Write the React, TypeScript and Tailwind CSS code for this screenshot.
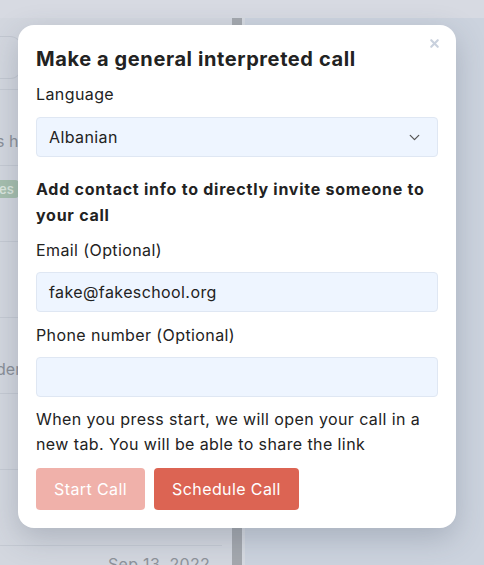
import { ChevronDown, X } from "lucide-react";

const font = { fontFamily: "Inter, 'Noto Sans', sans-serif" };

// dimmed rows of the list behind the dialog
const rows = [
  { text: "s h", pt: "pt-[40px]" },
  { text: "es", pt: "pt-[11px]", badge: true },
  { text: "", pt: "pt-[40px]" },
  { text: "der", pt: "pt-[40px]" },
  { text: "", pt: "pt-[40px]" },
  { text: "", pt: "pt-[40px]" },
];

export default function App() {
  return (
    <div className="relative w-[484px] h-[565px] overflow-hidden bg-[#ccd3de]" style={font}>
      {/* --- BACKGROUND PAGE (dimmed) --- */}
      <div className="h-[18px] bg-[#d7dae2]" />
      <div className="flex h-[547px]">
        <div className="w-[232px] bg-[#d3d7df] flex flex-col">
          <div className="h-[72px] pt-[18px] pr-[10px] border-b border-[#c5cad3]">
            <div className="h-[43px] w-[22px] rounded-r-xl border border-l-0 border-[#c3c8d1]" />
          </div>
          {rows.map((r, i) => (
            <div key={i} className={`h-[76px] ${r.pt} shrink-0 border-b border-[#c5cad3] mr-[10px] text-[16px] leading-[22px] text-[#8a8f98]`}>
              {r.badge ? (
                <span className="-ml-[6px] px-[5px] py-[1px] rounded bg-[#a6bfae] text-[#dbe6de] text-[13px] font-semibold">es</span>
              ) : (
                <span className="-ml-[4px]">{r.text}</span>
              )}
            </div>
          ))}
        </div>
        <div className="w-[10px] bg-[#a4a8ae]" />
        <div className="w-[3px] bg-[#d6dae1]" />
        <div className="flex-1 bg-[#ccd3de]" />
      </div>
      <div className="absolute left-[108px] top-[552px] text-[16px] tracking-[0.3px] text-[#8d929a]">Sep 13, 2022</div>

      {/* --- DIALOG --- */}
      <div className="absolute left-[18px] top-[25px] w-[438px] rounded-[16px] bg-white shadow-[0_10px_30px_rgba(60,70,90,0.25)] px-[18px] pt-[20px] pb-[18px] text-[#222222] tracking-[0.4px]">
        <X className="absolute right-[15px] top-[12px] w-[13px] h-[13px] text-[#c9d1dd]" strokeWidth={4} />
        <h2 className="text-[20px] font-bold leading-[28px] tracking-[0.6px] text-[#222]">Make a general interpreted call</h2>

        <div className="mt-[9px] text-[16px] leading-[24px]">Language</div>
        <div className="mt-[11px] h-[40px] flex items-center justify-between pl-[12px] pr-[14px] rounded-[4px] bg-[#eef5ff] border border-[#dfe7f3] text-[16px]">
          <span>Albanian</span>
          <ChevronDown className="w-[17px] h-[17px] text-[#555]" strokeWidth={1.8} />
        </div>

        <div className="mt-[19px] text-[16px] font-bold leading-[26px] tracking-[0.75px]">
          Add contact info to directly invite someone to your call
        </div>

        <div className="mt-[10px] text-[16px] leading-[24px]">Email (Optional)</div>
        <div className="mt-[10px] h-[40px] flex items-center px-[12px] rounded-[4px] bg-[#eef5ff] border border-[#dfe7f3] text-[16px]">
          fake@fakeschool.org
        </div>

        <div className="mt-[11px] text-[16px] leading-[24px]">Phone number (Optional)</div>
        <div className="mt-[10px] h-[40px] rounded-[4px] bg-[#eef5ff] border border-[#dfe7f3]" />

        <p className="mt-[10px] text-[16px] leading-[25px]">
          When you press start, we will open your call in a new tab. You will be able to share the link
        </p>

        <div className="mt-[11px] flex gap-[9px]">
          <button className="h-[42px] w-[109px] rounded-[4px] bg-[#f0b1aa] text-white text-[16px]">Start Call</button>
          <button className="h-[42px] w-[145px] rounded-[4px] bg-[#dc6453] text-white text-[16px]">Schedule Call</button>
        </div>
      </div>
    </div>
  );
}
